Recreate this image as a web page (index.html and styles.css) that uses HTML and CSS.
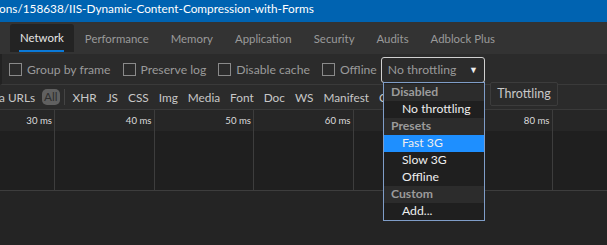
FILE: index.html
```html
<!DOCTYPE html>
<html lang="en">
<head>
  <meta charset="UTF-8" />
  <title>DevTools - Network</title>
  <link rel="stylesheet" href="styles.css">
</head>
<body>
  <div class="titlebar">ons/158638/IIS-Dynamic-Content-Compression-with-Forms</div>

  <div class="tabs">
    <span class="tab active">Network</span>
    <span class="tab">Performance</span>
    <span class="tab">Memory</span>
    <span class="tab">Application</span>
    <span class="tab">Security</span>
    <span class="tab">Audits</span>
    <span class="tab">Adblock Plus</span>
  </div>

  <div class="toolbar">
    <label class="check"><span class="box"></span>Group by frame</label>
    <label class="check"><span class="box"></span>Preserve log</label>
    <label class="check"><span class="box"></span>Disable cache</label>
    <label class="check"><span class="box"></span>Offline</label>
    <div class="select">No throttling <span class="arrow">&#9660;</span></div>
  </div>

  <div class="filters">
    <span class="cut">a URLs</span>
    <span class="pill">All</span>
    <span class="sep"></span>
    <span>XHR</span>
    <span>JS</span>
    <span>CSS</span>
    <span>Img</span>
    <span>Media</span>
    <span>Font</span>
    <span>Doc</span>
    <span>WS</span>
    <span>Manifest</span>
    <span>Other</span>
  </div>

  <div class="timeline">
    <div class="col first"><div class="tick">30 ms</div><div class="lane"></div></div>
    <div class="col"><div class="tick">40 ms</div><div class="lane"></div></div>
    <div class="col"><div class="tick">50 ms</div><div class="lane"></div></div>
    <div class="col"><div class="tick">60 ms</div><div class="lane"></div></div>
    <div class="col"><div class="tick">70 ms</div><div class="lane"></div></div>
    <div class="col"><div class="tick">80 ms</div><div class="lane"></div></div>
    <div class="col last"><div class="tick"></div><div class="lane"></div></div>
  </div>

  <div class="empty"></div>

  <!-- throttling dropdown, open -->
  <div class="menu">
    <div class="group">Disabled</div>
    <div class="item">No throttling</div>
    <div class="group">Presets</div>
    <div class="item selected">Fast 3G</div>
    <div class="item">Slow 3G</div>
    <div class="item">Offline</div>
    <div class="group">Custom</div>
    <div class="item">Add...</div>
  </div>

  <div class="tooltip">Throttling</div>
</body>
</html>
```

FILE: styles.css
```css
* { margin: 0; padding: 0; box-sizing: border-box; }
body {
  width: 607px;
  height: 245px;
  overflow: hidden;
  position: relative;
  background: #242424;
  font-family: Lato, 'Noto Sans', sans-serif;
  font-size: 12.5px;
  color: #ccc;
}
.titlebar {
  height: 22px;
  background: #0063b1;
  color: #fff;
  font-size: 11.8px;
  line-height: 18px;
  white-space: nowrap;
  overflow: hidden;
  margin-left: -1px;
}
.tabs {
  height: 32px;
  background: #333;
  display: flex;
  align-items: flex-end;
  padding-left: 10px;
  font-size: 11.4px;
}
.tab {
  height: 30px;
  line-height: 30px;
  padding: 0 11px;
  color: #9a9a9a;
  position: relative;
}
.tab.active {
  background: #232323;
  color: #e6e6e6;
  border-radius: 3px 3px 0 0;
  margin-bottom: 2px;
  height: 28px;
  line-height: 28px;
  padding: 0 10px;
}
.tab.active::after {
  content: "";
  position: absolute;
  left: 9px;
  right: 10px;
  bottom: 0;
  height: 2px;
  background: #0a79d8;
}
.toolbar {
  height: 31px;
  background: #2b2b2b;
  border-bottom: 1px solid #3a3a3a;
  border-left: 2px solid #222;
  display: flex;
  align-items: center;
  padding-left: 7px;
  gap: 12px;
  color: #9a9a9a;
  font-size: 12.2px;
}
.check {
  display: flex;
  align-items: center;
  gap: 5px;
}
.box {
  width: 13px;
  height: 13px;
  border: 1px solid #8a8a8a;
}
.select {
  width: 104px;
  height: 26px;
  margin-left: -8px;
  margin-top: 1px;
  border: 1px solid #d0d0d0;
  border-radius: 3px;
  display: flex;
  align-items: center;
  padding-left: 6px;
  color: #9a9a9a;
}
.arrow {
  margin-left: auto;
  margin-right: 6px;
  color: #eee;
  font-size: 9px;
}
.filters {
  height: 25px;
  background: #2b2b2b;
  border-bottom: 1px solid #3a3a3a;
  display: flex;
  align-items: center;
  gap: 10px;
  color: #c8c8c8;
  white-space: nowrap;
  overflow: hidden;
  font-size: 11.8px;
}
.cut { margin-left: -1px; }
.pill {
  background: #606060;
  color: #2e2e2e;
  border-radius: 5px;
  padding: 0 2px;
  height: 16px;
  line-height: 16px;
  margin-left: -3px;
}
.sep {
  width: 1px;
  height: 16px;
  background: #444;
  margin: 0 -2px 0 -6px;
}
.timeline {
  display: flex;
  border-bottom: 1px solid #3d3d3d;
}
.col {
  width: 99.5px;
  flex: none;
  border-right: 1px solid #3d3d3d;
}
.col.first { width: 55px; }
.col.last { flex: 1; border-right: none; }
.tick {
  height: 21px;
  background: #262626;
  text-align: right;
  padding-right: 2px;
  font-size: 9.6px;
  line-height: 21px;
  color: #dcdcdc;
}
.lane {
  height: 59px;
  background: #1f1f1f;
}
.empty { height: 54px; }
.menu {
  position: absolute;
  left: 383px;
  top: 82px;
  width: 102px;
  background: #1f1f1f;
  border: 1px solid #7f9dc8;
  padding-top: 1px;
  font-size: 12.2px;
}
.group {
  height: 17px;
  line-height: 16px;
  background: #2c2c2c;
  color: #9b9b9b;
  font-weight: bold;
  padding-left: 7px;
}
.item {
  height: 17px;
  line-height: 16px;
  color: #eee;
  padding-left: 18px;
}
.item.selected { background: #1e8fff; }
.tooltip {
  position: absolute;
  left: 490px;
  top: 82px;
  width: 68px;
  height: 24px;
  background: #2b2b2b;
  border: 1px solid #3c3c3c;
  border-radius: 2px;
  color: #c8c8c8;
  line-height: 21px;
  text-align: center;
}
```
